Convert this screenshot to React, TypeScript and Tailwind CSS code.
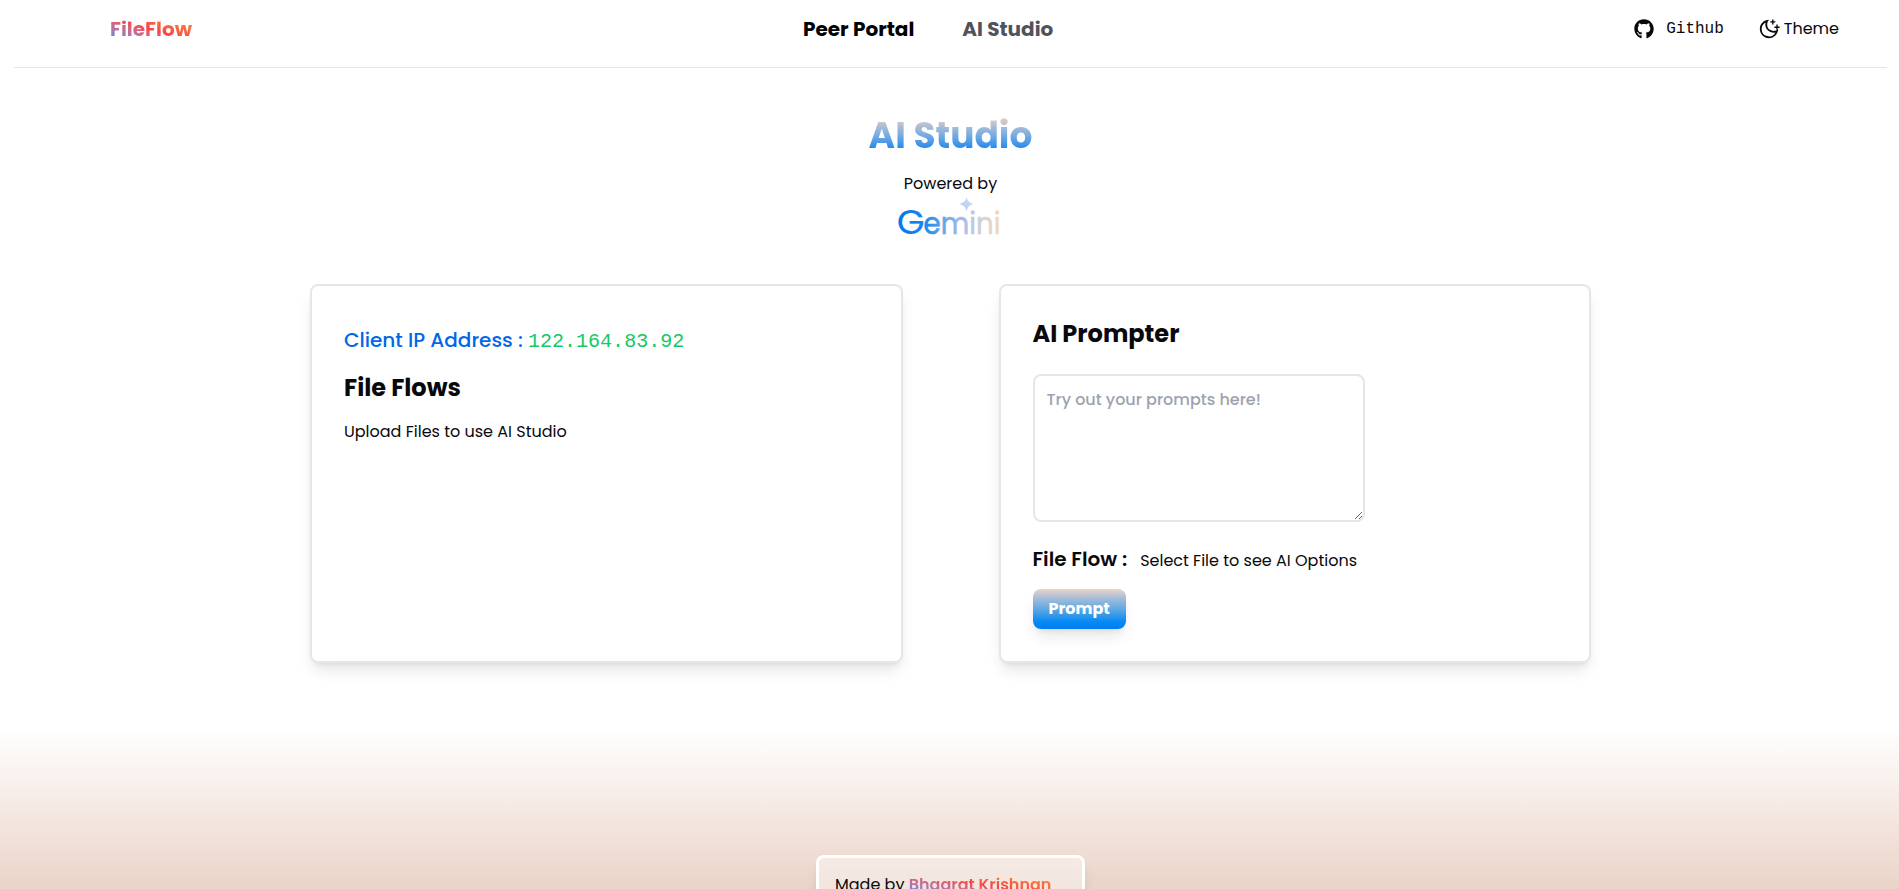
import { FaGithub } from "react-icons/fa";

function MoonIcon() {
  return (
    <svg width="22" height="22" viewBox="0 0 24 24" fill="currentColor">
      <path d="M10 7a7 7 0 0 0 12 4.9v.1c0 5.523-4.477 10-10 10S2 17.523 2 12 6.477 2 12 2h.1A6.979 6.979 0 0 0 10 7zm-6 5a8 8 0 0 0 15.062 3.762A9 9 0 0 1 8.238 4.938 7.999 7.999 0 0 0 4 12z" />
      <path d="M15.400 1.500h1.500v2h2V5h-2v2h-1.500V5h-2V3.500h2zM20 7.200h1.500v2.100h2.100v1.500h-2.100v2.100H20v-2.100h-2.100V9.300H20z" />
    </svg>
  );
}

function Header() {
  return (
    <header className="mr-3 ml-3.5 flex h-[68px] shrink-0 items-start border-b border-[#e4e4e5] pr-12 pl-24">
      <div className="flex h-[58px] w-[693px] shrink-0 items-center">
        <span className="bg-linear-to-tr from-blue-500 via-[#fb4247] to-[#ee9a28] bg-clip-text text-xl font-bold text-transparent">
          FileFlow
        </span>
      </div>
      <nav className="flex h-[58px] items-center gap-12 text-xl font-bold">
        <a className="text-black">Peer Portal</a>
        <a className="text-[#52525b]">AI Studio</a>
      </nav>
      <div className="ml-auto flex h-[57px] items-center justify-end">
        <a className="flex items-center gap-3 font-['Liberation_Mono',monospace]">
          <FaGithub size={20} />
          Github
        </a>
        <button className="ml-[34px] flex items-center gap-1">
          <MoonIcon />
          Theme
        </button>
      </div>
    </header>
  );
}

function GeminiLogo() {
  return (
    <svg width="103" height="40" viewBox="0 0 103 40" className="overflow-visible">
      <defs>
        <linearGradient id="gem" gradientUnits="userSpaceOnUse" x1="0" y1="0" x2="103" y2="0">
          <stop offset="0" stopColor="#0074f0" />
          <stop offset="0.25" stopColor="#1c86ee" />
          <stop offset="0.5" stopColor="#7fb1e8" />
          <stop offset="0.68" stopColor="#b4c3ea" />
          <stop offset="0.82" stopColor="#d6d3d3" />
          <stop offset="1" stopColor="#f3d8bc" />
        </linearGradient>
        <linearGradient id="star" x1="0" y1="1" x2="1" y2="0">
          <stop offset="0" stopColor="#a9c6f3" />
          <stop offset="1" stopColor="#dfe1ee" />
        </linearGradient>
      </defs>
      <g fontFamily="Poppins, Inter, sans-serif" fill="url(#gem)" stroke="url(#gem)">
        <text x="-2" y="35.500" fontSize="34" strokeWidth="0.200" textLength="27.500" lengthAdjust="spacingAndGlyphs">
          G
        </text>
        <text x="24.500" y="35.500" fontSize="29.500" strokeWidth="0.600" textLength="77" lengthAdjust="spacingAndGlyphs">
          emini
        </text>
      </g>
      <path d="M67.500 -1q1.200 5.800 7 7-5.800 1.200-7 7-1.200-5.800-7-7 5.800-1.200 7-7z" fill="url(#star)" />
    </svg>
  );
}

function Hero() {
  return (
    <section className="flex shrink-0 flex-col items-center pt-12 pl-0.5">
      <h1 className="bg-[linear-gradient(to_top,#007cf8,#2088ee_17%,#72aae2_50%,#b4bfd4_77%,#efd3c6)] bg-clip-text text-4xl font-bold text-transparent">
        AI Studio
      </h1>
      <p className="mt-4">Powered by</p>
      <div className="mt-0.5 h-[40px]">
        <GeminiLogo />
      </div>
    </section>
  );
}

function FilesCard() {
  return (
    <section className="rounded-lg border-2 border-[#e5e5ea] bg-white p-8 shadow-lg">
      <p className="mt-2 text-xl font-medium text-[#0068e6]">
        Client IP Address :{" "}
        <span className="font-['Liberation_Mono',monospace] font-normal text-[#12c964]">122.164.83.92</span>
      </p>
      <h2 className="mt-4 text-2xl font-bold">File Flows</h2>
      <p className="mt-4">Upload Files to use AI Studio</p>
    </section>
  );
}

function PromptCard() {
  return (
    <section className="rounded-lg border-2 border-[#e5e5ea] bg-white p-8 shadow-lg">
      <h2 className="text-2xl font-bold">AI Prompter</h2>
      <textarea
        rows={5}
        placeholder="Try out your prompts here!"
        className="mt-6 block h-[148px] w-[332px] rounded-lg border-2 border-[#e5e5ea] p-3 font-medium placeholder:text-[#9ca3af]"
      />
      <div className="mt-[23px] flex items-baseline gap-[13px]">
        <span className="text-xl font-semibold">File Flow :</span>
        <span>Select File to see AI Options</span>
      </div>
      <button className="mt-4 block h-10 rounded-lg bg-[linear-gradient(to_top,#007cf8,#0488f3_17%,#5fa8e3_50%,#a5bdd8_77%,#efd3c6)] px-4 font-bold text-white shadow-lg">
        Prompt
      </button>
    </section>
  );
}

function Footer() {
  return (
    <footer className="mt-[56px] flex h-[300px] shrink-0 justify-center bg-linear-to-b from-white from-3% to-[#d9b19d] pt-[136px] pl-0.5">
      <div className="h-[90px] w-[269px] rounded-lg border-3 border-white bg-white/40 px-4 pt-[15px] shadow-lg">
        Made by{" "}
        <span className="bg-linear-to-tr from-blue-500 via-[#fb4247] to-[#ee9a28] bg-clip-text font-semibold text-transparent">
          Bhaarat Krishnan
        </span>
      </div>
    </footer>
  );
}

export default function App() {
  return (
    <div className="flex h-[889px] flex-col overflow-hidden bg-white font-['Poppins','Inter',sans-serif] text-base text-[#09090b]">
      <Header />
      <Hero />
      <main className="mt-[46px] flex h-[379px] shrink-0 justify-center pl-0.5">
        <div className="grid w-[1281px] grid-cols-2 gap-24">
          <FilesCard />
          <PromptCard />
        </div>
      </main>
      <Footer />
    </div>
  );
}
